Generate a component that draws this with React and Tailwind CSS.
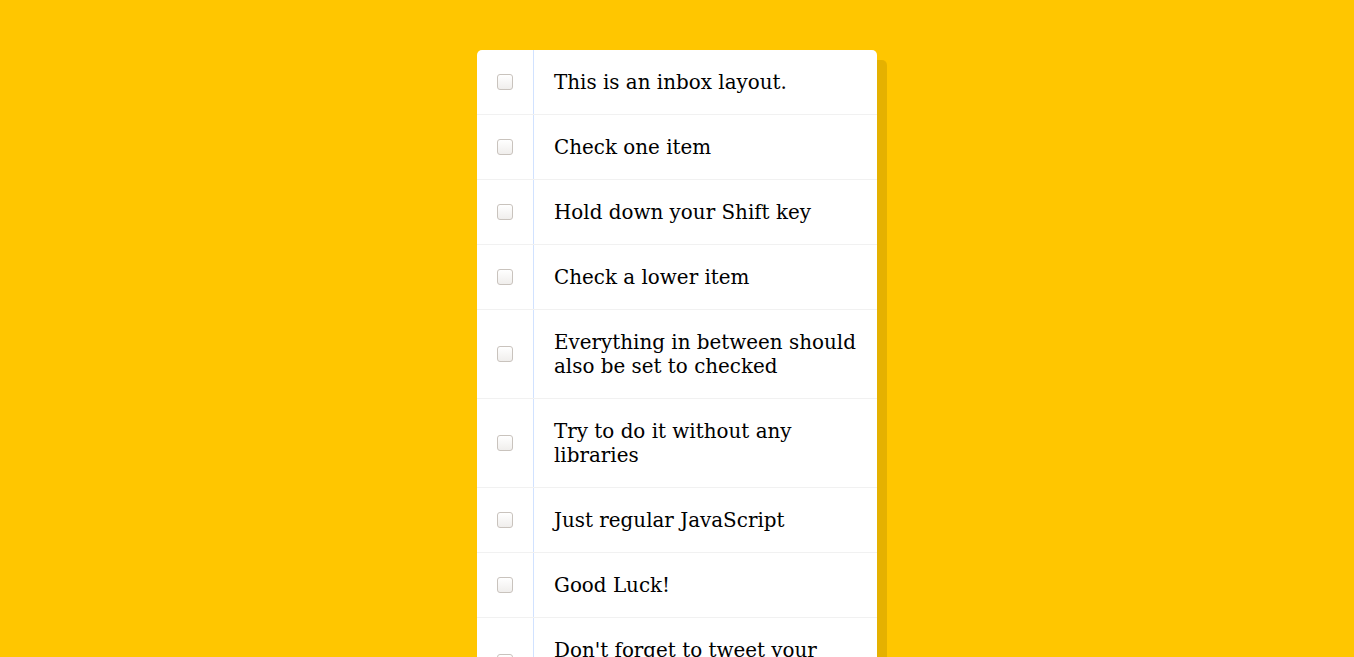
import { useState } from 'react';

const ITEMS = [
  'This is an inbox layout.',
  'Check one item',
  'Hold down your Shift key',
  'Check a lower item',
  'Everything in between should also be set to checked',
  'Try to do it without any libraries',
  'Just regular JavaScript',
  'Good Luck!',
  "Don't forget to tweet your result!",
];

const App = () => {
  const [checked, setChecked] = useState(ITEMS.map(() => false));
  const [lastIndex, setLastIndex] = useState(null);

  const toggle = (i, e) => {
    const value = e.target.checked;
    const next = [...checked];
    next[i] = value;
    if (e.nativeEvent.shiftKey && value && lastIndex !== null) {
      const [a, b] = [Math.min(i, lastIndex), Math.max(i, lastIndex)];
      for (let k = a; k <= b; k++) next[k] = true;
    }
    setChecked(next);
    if (value) setLastIndex(i);
  };

  return (
    <div className="min-h-screen bg-[#ffc600] py-[50px]">
      <div className="mx-auto max-w-[400px] bg-white rounded-[5px] shadow-[10px_10px_0_rgba(0,0,0,0.1)]">
        {ITEMS.map((text, i) => (
          <div
            key={i}
            className="flex items-center border-b border-[#f1f1f1] last:border-b-0"
          >
            <input
              type="checkbox"
              checked={checked[i]}
              onChange={(e) => toggle(i, e)}
              className="m-5 w-4 h-4 shrink-0 appearance-none rounded-[3px] border border-[#c9c3bd] bg-gradient-to-b from-white to-[#f0eeec] checked:bg-[#3b82f6] checked:border-[#3b82f6]"
            />
            <p
              className={`flex-1 m-0 px-5 pt-[21px] pb-[19px] border-l border-[#d1e2ff] text-[19.9px] leading-[24px] text-black font-['DejaVu_Serif',serif] ${
                checked[i] ? 'bg-[#f9f9f9] line-through' : ''
              }`}
            >
              {text}
            </p>
          </div>
        ))}
      </div>
    </div>
  );
};

export default App;
